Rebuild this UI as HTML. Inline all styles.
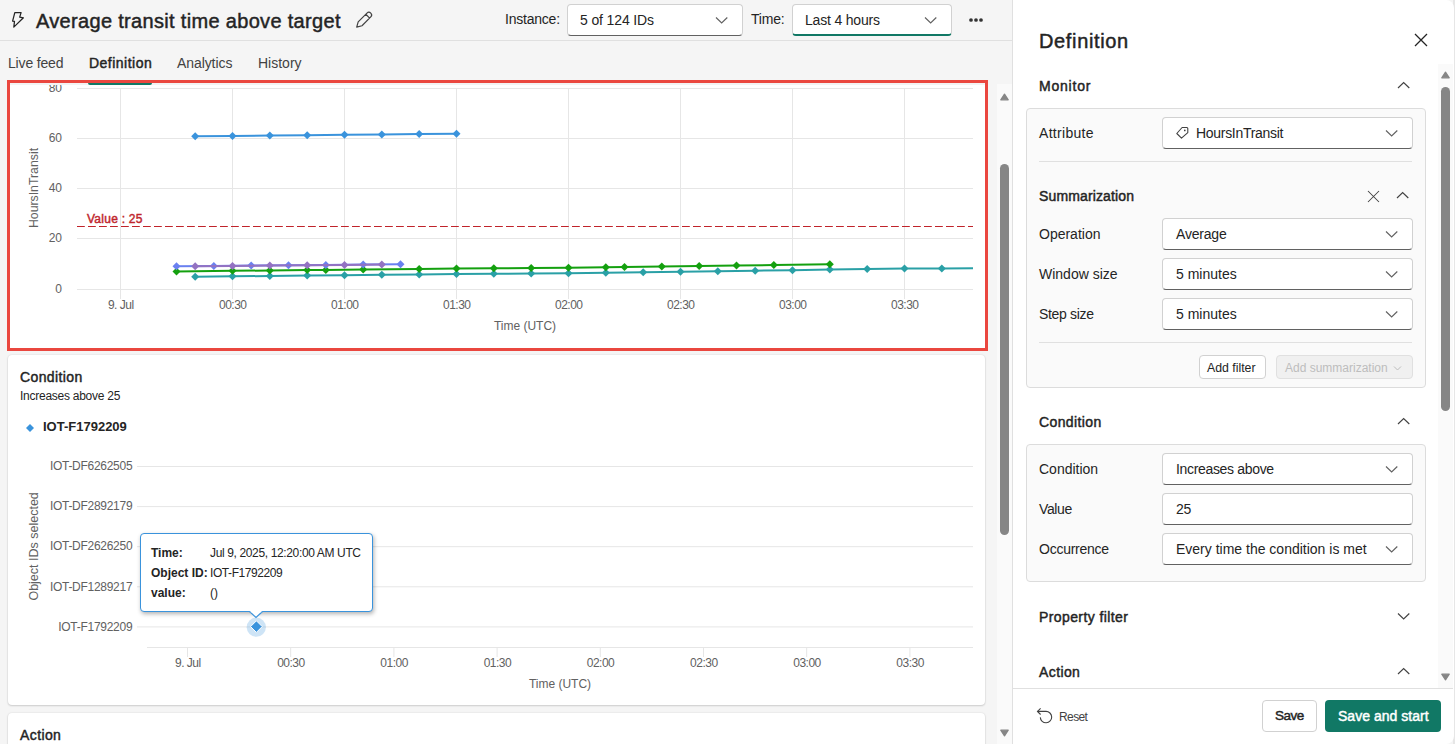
<!DOCTYPE html>
<html><head><meta charset="utf-8"><style>
*{box-sizing:border-box;margin:0;padding:0}
html,body{width:1455px;height:744px;overflow:hidden;background:#f5f5f5;font-family:"Liberation Sans", sans-serif;color:#242424}
.a{position:absolute;white-space:nowrap}
.dd{position:absolute;background:#fff;border:1px solid #d1d1d1;border-bottom-color:#616161;border-radius:4px}
.chev{position:absolute;width:8px;height:8px;border-right:1.3px solid #424242;border-bottom:1.3px solid #424242;transform:rotate(45deg)}
.chevu{position:absolute;width:8px;height:8px;border-left:1.3px solid #424242;border-top:1.3px solid #424242;transform:rotate(45deg)}
.lbl{font-size:14px;color:#242424}
.sb{font-weight:400;-webkit-text-stroke-width:0.45px;font-size:14px}
</style></head><body>
<!-- header -->
<div class="a" style="left:0;top:40px;width:1013px;height:1px;background:#e0e0e0"></div>
<svg class="a" style="left:11px;top:11px" width="15" height="18" viewBox="0 0 15 18"><path d="M3.8,1.6 H10.1 L8.7,6.1 L12.4,6.8 L2.8,16.1 L3.5,10.4 L1.6,10.1 Z" fill="none" stroke="#242424" stroke-width="1.25" stroke-linejoin="round"/></svg>
<div class="a" style="left:36px;top:8px;font-size:20px;letter-spacing:0.32px;font-weight:400;-webkit-text-stroke-width:0.45px;line-height:26px">Average transit time above target</div>
<svg class="a" style="left:345px;top:5px" width="40" height="30"><g transform="translate(11.7,22.2) rotate(-45)"><path d="M0,0 L4.8,-2.7 H17.2 A2.7,2.7 0 0 1 17.2,2.7 H4.8 Z M15.6,-2.7 V2.7" fill="none" stroke="#424242" stroke-width="1.2" stroke-linejoin="round"/></g></svg>
<div class="a" style="left:505px;top:9px;font-size:14px;letter-spacing:-0.22px;line-height:20px">Instance:</div>
<div class="dd" style="left:567px;top:4px;width:176px;height:32px"></div>
<div class="a" style="left:580px;top:10px;font-size:14px;letter-spacing:-0.13px;line-height:20px">5 of 124 IDs</div>
<svg class="a" style="left:713.25px;top:16.20px" width="17.3" height="8.5"><path d="M3,1.5 L8.65,7.00 L14.30,1.5" fill="none" stroke="#616161" stroke-width="1.15" stroke-linejoin="miter"/></svg>
<div class="a" style="left:751px;top:9px;font-size:14px;letter-spacing:-0.2px;line-height:20px">Time:</div>
<div class="dd" style="left:792px;top:4px;width:160px;height:32px;border-bottom:2px solid #117865"></div>
<div class="a" style="left:805px;top:10px;font-size:14px;letter-spacing:-0.18px;line-height:20px">Last 4 hours</div>
<svg class="a" style="left:922.15px;top:16.20px" width="17.3" height="8.5"><path d="M3,1.5 L8.65,7.00 L14.30,1.5" fill="none" stroke="#616161" stroke-width="1.15" stroke-linejoin="miter"/></svg>
<svg class="a" style="left:967px;top:17px" width="18" height="6"><circle cx="4" cy="3" r="1.85" fill="#333"/><circle cx="9" cy="3" r="1.85" fill="#333"/><circle cx="14" cy="3" r="1.85" fill="#333"/></svg>
<!-- tabs -->
<div class="a" style="left:8px;top:54px;font-size:14px;letter-spacing:-0.17px;line-height:18px;color:#424242">Live feed</div>
<div class="a" style="left:89px;top:54px;font-size:14px;letter-spacing:0.48px;line-height:18px;font-weight:400;-webkit-text-stroke-width:0.45px">Definition</div>
<div class="a" style="left:177px;top:54px;font-size:14px;letter-spacing:-0.08px;line-height:18px;color:#424242">Analytics</div>
<div class="a" style="left:258px;top:54px;font-size:14px;line-height:18px;color:#424242">History</div>

<!-- main chart card -->
<div class="a" style="left:7px;top:80px;width:981px;height:271px;background:#fff;border:3px solid #ea473f"></div>
<svg width="1455" height="744" style="position:absolute;left:0;top:0" font-family='"Liberation Sans", sans-serif' font-size="12">
<defs><clipPath id="cp1"><rect x="10" y="85" width="975" height="262"/></clipPath></defs>
<g clip-path="url(#cp1)">
<line x1="77" y1="88.5" x2="973" y2="88.5" stroke="#e6e6e6" stroke-width="1"/><line x1="77" y1="138.5" x2="973" y2="138.5" stroke="#e6e6e6" stroke-width="1"/><line x1="77" y1="188.5" x2="973" y2="188.5" stroke="#e6e6e6" stroke-width="1"/><line x1="77" y1="238.5" x2="973" y2="238.5" stroke="#e6e6e6" stroke-width="1"/><line x1="77" y1="289.5" x2="973" y2="289.5" stroke="#e6e6e6" stroke-width="1"/><line x1="120.5" y1="88" x2="120.5" y2="299" stroke="#e6e6e6" stroke-width="1"/><line x1="232.5" y1="88" x2="232.5" y2="299" stroke="#e6e6e6" stroke-width="1"/><line x1="344.5" y1="88" x2="344.5" y2="299" stroke="#e6e6e6" stroke-width="1"/><line x1="456.5" y1="88" x2="456.5" y2="299" stroke="#e6e6e6" stroke-width="1"/><line x1="568.5" y1="88" x2="568.5" y2="299" stroke="#e6e6e6" stroke-width="1"/><line x1="680.5" y1="88" x2="680.5" y2="299" stroke="#e6e6e6" stroke-width="1"/><line x1="792.5" y1="88" x2="792.5" y2="299" stroke="#e6e6e6" stroke-width="1"/><line x1="904.5" y1="88" x2="904.5" y2="299" stroke="#e6e6e6" stroke-width="1"/>
<g fill="#616161"><text x="62" y="91.5" text-anchor="end">80</text><text x="62" y="141.5" text-anchor="end">60</text><text x="62" y="191.5" text-anchor="end">40</text><text x="62" y="241.5" text-anchor="end">20</text><text x="62" y="292.5" text-anchor="end">0</text><text x="120.75" y="309" text-anchor="middle" letter-spacing="-0.5">9. Jul</text><text x="232.75" y="309" text-anchor="middle" letter-spacing="-0.5">00:30</text><text x="344.75" y="309" text-anchor="middle" letter-spacing="-0.5">01:00</text><text x="456.75" y="309" text-anchor="middle" letter-spacing="-0.5">01:30</text><text x="568.75" y="309" text-anchor="middle" letter-spacing="-0.5">02:00</text><text x="680.75" y="309" text-anchor="middle" letter-spacing="-0.5">02:30</text><text x="792.75" y="309" text-anchor="middle" letter-spacing="-0.5">03:00</text><text x="904.75" y="309" text-anchor="middle" letter-spacing="-0.5">03:30</text>
<text x="525" y="330" text-anchor="middle">Time (UTC)</text>
<text transform="translate(38,188) rotate(-90)" text-anchor="middle" font-size="12.3">HoursInTransit</text>
</g>
<line x1="77" y1="226.5" x2="973" y2="226.5" stroke="#c0232a" stroke-width="1.2" stroke-dasharray="7.8,3.2"/>
<text x="87" y="223" fill="#c0262d" font-size="12" letter-spacing="0.25" stroke="#c0262d" stroke-width="0.45">Value : 25</text>
<path d="M195.2,136.3 L232.5,135.9 L269.8,135.6 L307.2,135.2 L344.5,134.8 L381.8,134.4 L419.2,134.1 L456.5,133.7" fill="none" stroke="#3a93dc" stroke-width="2" stroke-linejoin="round"/><path d="M195.2,132.3 L199.2,136.3 L195.2,140.3 L191.2,136.3Z" fill="#3a93dc"/><path d="M232.5,131.9 L236.5,135.9 L232.5,139.9 L228.5,135.9Z" fill="#3a93dc"/><path d="M269.8,131.6 L273.8,135.6 L269.8,139.6 L265.8,135.6Z" fill="#3a93dc"/><path d="M307.2,131.2 L311.2,135.2 L307.2,139.2 L303.2,135.2Z" fill="#3a93dc"/><path d="M344.5,130.8 L348.5,134.8 L344.5,138.8 L340.5,134.8Z" fill="#3a93dc"/><path d="M381.8,130.4 L385.8,134.4 L381.8,138.4 L377.8,134.4Z" fill="#3a93dc"/><path d="M419.2,130.1 L423.2,134.1 L419.2,138.1 L415.2,134.1Z" fill="#3a93dc"/><path d="M456.5,129.7 L460.5,133.7 L456.5,137.7 L452.5,133.7Z" fill="#3a93dc"/><path d="M195.2,276.7 L232.5,276.3 L269.8,276.0 L307.2,275.6 L344.5,275.2 L381.8,274.8 L419.2,274.5 L456.5,274.1 L493.8,273.8 L531.2,273.6 L568.5,273.3 L605.8,272.8 L643.2,272.2 L680.5,271.7 L717.8,271.2 L755.2,270.7 L792.5,270.2 L829.8,269.6 L867.2,269.1 L904.5,268.6 L941.8,268.4 L973.0,268.2" fill="none" stroke="#2aa0a6" stroke-width="2" stroke-linejoin="round"/><path d="M195.2,272.7 L199.2,276.7 L195.2,280.7 L191.2,276.7Z" fill="#2aa0a6"/><path d="M232.5,272.3 L236.5,276.3 L232.5,280.3 L228.5,276.3Z" fill="#2aa0a6"/><path d="M269.8,272.0 L273.8,276.0 L269.8,280.0 L265.8,276.0Z" fill="#2aa0a6"/><path d="M307.2,271.6 L311.2,275.6 L307.2,279.6 L303.2,275.6Z" fill="#2aa0a6"/><path d="M344.5,271.2 L348.5,275.2 L344.5,279.2 L340.5,275.2Z" fill="#2aa0a6"/><path d="M381.8,270.8 L385.8,274.8 L381.8,278.8 L377.8,274.8Z" fill="#2aa0a6"/><path d="M419.2,270.5 L423.2,274.5 L419.2,278.5 L415.2,274.5Z" fill="#2aa0a6"/><path d="M456.5,270.1 L460.5,274.1 L456.5,278.1 L452.5,274.1Z" fill="#2aa0a6"/><path d="M493.8,269.8 L497.8,273.8 L493.8,277.8 L489.8,273.8Z" fill="#2aa0a6"/><path d="M531.2,269.6 L535.2,273.6 L531.2,277.6 L527.2,273.6Z" fill="#2aa0a6"/><path d="M568.5,269.3 L572.5,273.3 L568.5,277.3 L564.5,273.3Z" fill="#2aa0a6"/><path d="M605.8,268.8 L609.8,272.8 L605.8,276.8 L601.8,272.8Z" fill="#2aa0a6"/><path d="M643.2,268.2 L647.2,272.2 L643.2,276.2 L639.2,272.2Z" fill="#2aa0a6"/><path d="M680.5,267.7 L684.5,271.7 L680.5,275.7 L676.5,271.7Z" fill="#2aa0a6"/><path d="M717.8,267.2 L721.8,271.2 L717.8,275.2 L713.8,271.2Z" fill="#2aa0a6"/><path d="M755.2,266.7 L759.2,270.7 L755.2,274.7 L751.2,270.7Z" fill="#2aa0a6"/><path d="M792.5,266.2 L796.5,270.2 L792.5,274.2 L788.5,270.2Z" fill="#2aa0a6"/><path d="M829.8,265.6 L833.8,269.6 L829.8,273.6 L825.8,269.6Z" fill="#2aa0a6"/><path d="M867.2,265.1 L871.2,269.1 L867.2,273.1 L863.2,269.1Z" fill="#2aa0a6"/><path d="M904.5,264.6 L908.5,268.6 L904.5,272.6 L900.5,268.6Z" fill="#2aa0a6"/><path d="M941.8,264.4 L945.8,268.4 L941.8,272.4 L937.8,268.4Z" fill="#2aa0a6"/><path d="M176.5,271.4 L232.5,270.8 L269.8,270.5 L307.2,270.1 L325.8,269.9 L363.2,269.5 L419.2,269.0 L456.5,268.6 L493.8,268.3 L531.2,268.0 L568.5,267.7 L605.8,267.2 L624.5,267.0 L661.8,266.5 L699.2,266.0 L736.5,265.5 L773.8,265.0 L829.8,264.3" fill="none" stroke="#14a00f" stroke-width="2" stroke-linejoin="round"/><path d="M176.5,267.4 L180.5,271.4 L176.5,275.4 L172.5,271.4Z" fill="#14a00f"/><path d="M232.5,266.8 L236.5,270.8 L232.5,274.8 L228.5,270.8Z" fill="#14a00f"/><path d="M269.8,266.5 L273.8,270.5 L269.8,274.5 L265.8,270.5Z" fill="#14a00f"/><path d="M307.2,266.1 L311.2,270.1 L307.2,274.1 L303.2,270.1Z" fill="#14a00f"/><path d="M325.8,265.9 L329.8,269.9 L325.8,273.9 L321.8,269.9Z" fill="#14a00f"/><path d="M363.2,265.5 L367.2,269.5 L363.2,273.5 L359.2,269.5Z" fill="#14a00f"/><path d="M419.2,265.0 L423.2,269.0 L419.2,273.0 L415.2,269.0Z" fill="#14a00f"/><path d="M456.5,264.6 L460.5,268.6 L456.5,272.6 L452.5,268.6Z" fill="#14a00f"/><path d="M493.8,264.3 L497.8,268.3 L493.8,272.3 L489.8,268.3Z" fill="#14a00f"/><path d="M531.2,264.0 L535.2,268.0 L531.2,272.0 L527.2,268.0Z" fill="#14a00f"/><path d="M568.5,263.7 L572.5,267.7 L568.5,271.7 L564.5,267.7Z" fill="#14a00f"/><path d="M605.8,263.2 L609.8,267.2 L605.8,271.2 L601.8,267.2Z" fill="#14a00f"/><path d="M624.5,263.0 L628.5,267.0 L624.5,271.0 L620.5,267.0Z" fill="#14a00f"/><path d="M661.8,262.5 L665.8,266.5 L661.8,270.5 L657.8,266.5Z" fill="#14a00f"/><path d="M699.2,262.0 L703.2,266.0 L699.2,270.0 L695.2,266.0Z" fill="#14a00f"/><path d="M736.5,261.5 L740.5,265.5 L736.5,269.5 L732.5,265.5Z" fill="#14a00f"/><path d="M773.8,261.0 L777.8,265.0 L773.8,269.0 L769.8,265.0Z" fill="#14a00f"/><path d="M829.8,260.3 L833.8,264.3 L829.8,268.3 L825.8,264.3Z" fill="#14a00f"/><path d="M176.5,266.3 L213.8,265.9 L251.2,265.6 L288.5,265.2 L325.8,264.9 L363.2,264.5 L400.5,264.2" fill="none" stroke="#6a80f0" stroke-width="2" stroke-linejoin="round"/><path d="M176.5,262.3 L180.5,266.3 L176.5,270.3 L172.5,266.3Z" fill="#6a80f0"/><path d="M213.8,261.9 L217.8,265.9 L213.8,269.9 L209.8,265.9Z" fill="#6a80f0"/><path d="M251.2,261.6 L255.2,265.6 L251.2,269.6 L247.2,265.6Z" fill="#6a80f0"/><path d="M288.5,261.2 L292.5,265.2 L288.5,269.2 L284.5,265.2Z" fill="#6a80f0"/><path d="M325.8,260.9 L329.8,264.9 L325.8,268.9 L321.8,264.9Z" fill="#6a80f0"/><path d="M363.2,260.5 L367.2,264.5 L363.2,268.5 L359.2,264.5Z" fill="#6a80f0"/><path d="M400.5,260.2 L404.5,264.2 L400.5,268.2 L396.5,264.2Z" fill="#6a80f0"/><path d="M195.2,266.3 L232.5,266.0 L269.8,265.6 L307.2,265.3 L344.5,264.9 L381.8,264.6" fill="none" stroke="#9372c2" stroke-width="2" stroke-linejoin="round"/><path d="M195.2,262.3 L199.2,266.3 L195.2,270.3 L191.2,266.3Z" fill="#9372c2"/><path d="M232.5,262.0 L236.5,266.0 L232.5,270.0 L228.5,266.0Z" fill="#9372c2"/><path d="M269.8,261.6 L273.8,265.6 L269.8,269.6 L265.8,265.6Z" fill="#9372c2"/><path d="M307.2,261.3 L311.2,265.3 L307.2,269.3 L303.2,265.3Z" fill="#9372c2"/><path d="M344.5,260.9 L348.5,264.9 L344.5,268.9 L340.5,264.9Z" fill="#9372c2"/><path d="M381.8,260.6 L385.8,264.6 L381.8,268.6 L377.8,264.6Z" fill="#9372c2"/>
</g>
</svg>
<div class="a" style="left:10px;top:83px;width:975px;height:2px;background:#f3f3f3"></div>
<div class="a" style="left:88px;top:82.5px;width:64px;height:2.5px;background:#117865;border-radius:0 0 2px 2px"></div>

<!-- condition card -->
<div class="a" style="left:8px;top:355px;width:977px;height:350px;background:#fff;border-radius:4px;box-shadow:0 0 2px rgba(0,0,0,0.12),0 1px 2px rgba(0,0,0,0.14)"></div>
<div class="a" style="left:20px;top:368px;font-size:14px;letter-spacing:0.38px;font-weight:400;-webkit-text-stroke-width:0.45px;line-height:18px">Condition</div>
<div class="a" style="left:20px;top:388px;font-size:12px;letter-spacing:-0.26px;line-height:16px">Increases above 25</div>
<div class="a" style="left:43px;top:418px;font-size:13px;font-weight:700;line-height:18px">IOT-F1792209</div>
<svg width="1455" height="744" style="position:absolute;left:0;top:0" font-family='"Liberation Sans", sans-serif' font-size="12">
<line x1="137" y1="466.5" x2="973" y2="466.5" stroke="#e6e6e6" stroke-width="1"/><text x="132.3" y="469.7" text-anchor="end" fill="#616161" letter-spacing="-0.28">IOT-DF6262505</text><line x1="137" y1="506.6" x2="973" y2="506.6" stroke="#e6e6e6" stroke-width="1"/><text x="132.3" y="510.1" text-anchor="end" fill="#616161" letter-spacing="-0.28">IOT-DF2892179</text><line x1="137" y1="546.7" x2="973" y2="546.7" stroke="#e6e6e6" stroke-width="1"/><text x="132.3" y="550.4" text-anchor="end" fill="#616161" letter-spacing="-0.28">IOT-DF2626250</text><line x1="137" y1="586.8" x2="973" y2="586.8" stroke="#e6e6e6" stroke-width="1"/><text x="132.3" y="590.8" text-anchor="end" fill="#616161" letter-spacing="-0.28">IOT-DF1289217</text><line x1="137" y1="626.9" x2="973" y2="626.9" stroke="#e6e6e6" stroke-width="1"/><text x="132.3" y="631.1" text-anchor="end" fill="#616161" letter-spacing="-0.28">IOT-F1792209</text><line x1="147" y1="647.5" x2="973" y2="647.5" stroke="#e6e6e6" stroke-width="1"/><line x1="187.5" y1="647" x2="187.5" y2="657" stroke="#e6e6e6" stroke-width="1"/><text x="187.8" y="667" text-anchor="middle" fill="#616161" letter-spacing="-0.5">9. Jul</text><line x1="290.7" y1="647" x2="290.7" y2="657" stroke="#e6e6e6" stroke-width="1"/><text x="290.9" y="667" text-anchor="middle" fill="#616161" letter-spacing="-0.5">00:30</text><line x1="393.9" y1="647" x2="393.9" y2="657" stroke="#e6e6e6" stroke-width="1"/><text x="394.1" y="667" text-anchor="middle" fill="#616161" letter-spacing="-0.5">01:00</text><line x1="497.1" y1="647" x2="497.1" y2="657" stroke="#e6e6e6" stroke-width="1"/><text x="497.4" y="667" text-anchor="middle" fill="#616161" letter-spacing="-0.5">01:30</text><line x1="600.3" y1="647" x2="600.3" y2="657" stroke="#e6e6e6" stroke-width="1"/><text x="600.5" y="667" text-anchor="middle" fill="#616161" letter-spacing="-0.5">02:00</text><line x1="703.5" y1="647" x2="703.5" y2="657" stroke="#e6e6e6" stroke-width="1"/><text x="703.8" y="667" text-anchor="middle" fill="#616161" letter-spacing="-0.5">02:30</text><line x1="806.7" y1="647" x2="806.7" y2="657" stroke="#e6e6e6" stroke-width="1"/><text x="807.0" y="667" text-anchor="middle" fill="#616161" letter-spacing="-0.5">03:00</text><line x1="909.9" y1="647" x2="909.9" y2="657" stroke="#e6e6e6" stroke-width="1"/><text x="910.1" y="667" text-anchor="middle" fill="#616161" letter-spacing="-0.5">03:30</text><text x="560" y="688" text-anchor="middle" fill="#616161">Time (UTC)</text><text transform="translate(37.8,546.4) rotate(-90)" text-anchor="middle" fill="#616161" font-size="12.5">Object IDs selected</text>
<circle cx="256.3" cy="627.2" r="9.6" fill="#3a93dc" fill-opacity="0.25"/>
<path d="M256.4,620.8 L262.2,626.6 L256.4,632.4 L250.6,626.6Z" fill="#3a93dc" stroke="#fff" stroke-width="1"/>
<path d="M30,424 L34,428 L30,432 L26,428Z" fill="#3a93dc"/>
</svg>
<!-- tooltip -->
<div class="a" style="left:140px;top:533px;width:233px;height:79px;background:#fff;border:1px solid #3a93dc;border-radius:4px;box-shadow:1px 2px 4px rgba(0,0,0,0.3)"></div>
<svg class="a" style="left:248.5px;top:610px" width="14" height="9"><path d="M0.5,1.5 L7,7.5 L13.5,1.5" fill="#fff" stroke="#3a93dc" stroke-width="1.2"/><rect x="1.6" y="0" width="10.8" height="2.3" fill="#fff"/></svg>
<div class="a" style="left:151px;top:545px;font-size:12px;line-height:16px;font-weight:700">Time:</div>
<div class="a" style="left:210px;top:545px;font-size:12px;letter-spacing:-0.36px;line-height:16px">Jul 9, 2025, 12:20:00 AM UTC</div>
<div class="a" style="left:151px;top:565px;font-size:12px;line-height:16px;font-weight:700">Object ID:</div>
<div class="a" style="left:210px;top:565px;font-size:12px;letter-spacing:-0.42px;line-height:16px">IOT-F1792209</div>
<div class="a" style="left:151px;top:585px;font-size:12px;line-height:16px;font-weight:700">value:</div>
<div class="a" style="left:210px;top:585px;font-size:12px;line-height:16px">()</div>

<!-- action card -->
<div class="a" style="left:8px;top:713px;width:977px;height:60px;background:#fff;border-radius:4px;box-shadow:0 0 2px rgba(0,0,0,0.12),0 1px 2px rgba(0,0,0,0.14)"></div>
<div class="a" style="left:20px;top:726px;font-size:14px;letter-spacing:0.4px;font-weight:400;-webkit-text-stroke-width:0.45px;line-height:18px">Action</div>

<!-- left scrollbar -->
<div class="a" style="left:997px;top:84px;width:15px;height:660px;background:#fafafa"></div>
<svg class="a" style="left:1000px;top:92.8px" width="9" height="8"><path d="M4.5,1.2 L8.2,6.8 L0.8,6.8Z" fill="#868686" stroke="#868686" stroke-width="1.3" stroke-linejoin="round"/></svg>
<div class="a" style="left:1000px;top:164px;width:9px;height:371px;background:#868686;border-radius:5px"></div>
<svg class="a" style="left:1000px;top:729px" width="9" height="8"><path d="M0.8,1.2 L8.2,1.2 L4.5,6.8Z" fill="#868686" stroke="#868686" stroke-width="1.3" stroke-linejoin="round"/></svg>

<!-- right panel -->
<div class="a" style="left:1453px;top:0;width:2px;height:744px;background:#e6e6e6"></div>
<div class="a" style="left:1012px;top:0;width:442px;height:744px;background:#fff;border-left:1px solid #e0e0e0;border-radius:0 8px 8px 0"></div>
<div class="a" style="left:1039px;top:29px;font-size:20px;letter-spacing:0.64px;font-weight:400;-webkit-text-stroke-width:0.45px;line-height:24px">Definition</div>
<svg class="a" style="left:1414px;top:33px" width="14" height="14"><path d="M1,1 L13,13 M13,1 L1,13" stroke="#242424" stroke-width="1.3"/></svg>
<div class="a sb" style="left:1039px;top:77px;line-height:18px;letter-spacing:0.78px">Monitor</div>
<svg class="a" style="left:1395.35px;top:81.30px" width="17.3" height="8.5"><path d="M3,7.00 L8.65,1.5 L14.30,7.00" fill="none" stroke="#424242" stroke-width="1.15" stroke-linejoin="miter"/></svg>

<!-- monitor card -->
<div class="a" style="left:1026px;top:108px;width:400px;height:280px;background:#fafafa;border:1px solid #dcdcdc;border-radius:4px"></div>
<div class="a lbl" style="left:1039px;top:124px;line-height:18px;letter-spacing:0.3px">Attribute</div>
<div class="dd" style="left:1162px;top:117px;width:251px;height:32px"></div>
<svg class="a" style="left:1176px;top:126px" width="13" height="13" viewBox="0 0 13 13"><path d="M6.1,1.5 H10.8 Q11.8,1.5 11.8,2.5 V6.6 L5.5,12.2 L0.8,7.5 Z" fill="none" stroke="#424242" stroke-width="1.1" stroke-linejoin="round"/><circle cx="8.8" cy="4.4" r="0.85" fill="#424242"/></svg>
<div class="a lbl" style="left:1196px;top:124px;line-height:18px;letter-spacing:-0.3px">HoursInTransit</div>
<svg class="a" style="left:1383.35px;top:129.40px" width="17.3" height="8.5"><path d="M3,1.5 L8.65,7.00 L14.30,1.5" fill="none" stroke="#616161" stroke-width="1.15" stroke-linejoin="miter"/></svg>
<div class="a" style="left:1039px;top:161px;width:373px;height:1px;background:#e0e0e0"></div>
<div class="a" style="left:1039px;top:187px;font-size:14px;letter-spacing:0.13px;font-weight:400;-webkit-text-stroke-width:0.45px;line-height:18px">Summarization</div>
<svg class="a" style="left:1366.5px;top:189.5px" width="13" height="13"><path d="M1,1 L12,12 M12,1 L1,12" stroke="#424242" stroke-width="1.05"/></svg>
<svg class="a" style="left:1394.35px;top:191.30px" width="17.3" height="8.5"><path d="M3,7.00 L8.65,1.5 L14.30,7.00" fill="none" stroke="#424242" stroke-width="1.15" stroke-linejoin="miter"/></svg>
<div class="a lbl" style="left:1039px;top:225px;line-height:18px;font-size:14px;letter-spacing:0px">Operation</div><div class="dd" style="left:1162px;top:218px;width:251px;height:32px"></div><div class="a lbl" style="left:1176px;top:225px;line-height:18px;font-size:14px;letter-spacing:-0.2px">Average</div><svg class="a" style="left:1383.35px;top:229.90px" width="17.3" height="8.5"><path d="M3,1.5 L8.65,7.00 L14.30,1.5" fill="none" stroke="#616161" stroke-width="1.15" stroke-linejoin="miter"/></svg><div class="a lbl" style="left:1039px;top:265px;line-height:18px;font-size:14px;letter-spacing:0px">Window size</div><div class="dd" style="left:1162px;top:258px;width:251px;height:32px"></div><div class="a lbl" style="left:1176px;top:265px;line-height:18px;font-size:14px;letter-spacing:0px">5 minutes</div><svg class="a" style="left:1383.35px;top:269.90px" width="17.3" height="8.5"><path d="M3,1.5 L8.65,7.00 L14.30,1.5" fill="none" stroke="#616161" stroke-width="1.15" stroke-linejoin="miter"/></svg><div class="a lbl" style="left:1039px;top:305px;line-height:18px;font-size:14px;letter-spacing:-0.33px">Step size</div><div class="dd" style="left:1162px;top:298px;width:251px;height:32px"></div><div class="a lbl" style="left:1176px;top:305px;line-height:18px;font-size:14px;letter-spacing:0px">5 minutes</div><svg class="a" style="left:1383.35px;top:309.90px" width="17.3" height="8.5"><path d="M3,1.5 L8.65,7.00 L14.30,1.5" fill="none" stroke="#616161" stroke-width="1.15" stroke-linejoin="miter"/></svg><div class="a" style="left:1039px;top:342px;width:373px;height:1px;background:#e0e0e0"></div>
<div class="a" style="left:1199px;top:355px;width:67px;height:24px;background:#fff;border:1px solid #d1d1d1;border-radius:4px"></div>
<div class="a" style="left:1207px;top:360px;font-size:12.3px;line-height:16px">Add filter</div>
<div class="a" style="left:1276px;top:355px;width:137px;height:24px;background:#f0f0f0;border:1px solid #e0e0e0;border-radius:4px"></div>
<div class="a" style="left:1285px;top:360px;font-size:12px;line-height:16px;color:#bdbdbd">Add summarization</div>
<svg class="a" style="left:1391.00px;top:365.00px" width="13.0" height="6.5"><path d="M3,1.5 L6.50,5.00 L10.00,1.5" fill="none" stroke="#bdbdbd" stroke-width="1" stroke-linejoin="miter"/></svg>

<div class="a sb" style="left:1039px;top:413px;line-height:18px;font-size:14px;letter-spacing:0.38px">Condition</div>
<svg class="a" style="left:1395.35px;top:417.30px" width="17.3" height="8.5"><path d="M3,7.00 L8.65,1.5 L14.30,7.00" fill="none" stroke="#424242" stroke-width="1.15" stroke-linejoin="miter"/></svg>
<div class="a" style="left:1026px;top:444px;width:400px;height:138px;background:#fafafa;border:1px solid #dcdcdc;border-radius:4px"></div>
<div class="a lbl" style="left:1039px;top:460px;line-height:18px;font-size:14px;letter-spacing:0px">Condition</div><div class="dd" style="left:1162px;top:453px;width:251px;height:32px"></div><div class="a lbl" style="left:1176px;top:460px;line-height:18px;font-size:14px;letter-spacing:-0.33px">Increases above</div><svg class="a" style="left:1383.35px;top:464.90px" width="17.3" height="8.5"><path d="M3,1.5 L8.65,7.00 L14.30,1.5" fill="none" stroke="#616161" stroke-width="1.15" stroke-linejoin="miter"/></svg><div class="a lbl" style="left:1039px;top:500px;line-height:18px;font-size:14px;letter-spacing:-0.4px">Value</div><div class="dd" style="left:1162px;top:493px;width:251px;height:32px"></div><div class="a lbl" style="left:1176px;top:500px;line-height:18px;font-size:14px;letter-spacing:-0.4px">25</div><div class="a lbl" style="left:1039px;top:540px;line-height:18px;font-size:14px;letter-spacing:-0.25px">Occurrence</div><div class="dd" style="left:1162px;top:533px;width:251px;height:32px"></div><div class="a lbl" style="left:1176px;top:540px;line-height:18px;font-size:14px;letter-spacing:0px">Every time the condition is met</div><svg class="a" style="left:1383.35px;top:544.90px" width="17.3" height="8.5"><path d="M3,1.5 L8.65,7.00 L14.30,1.5" fill="none" stroke="#616161" stroke-width="1.15" stroke-linejoin="miter"/></svg>
<div class="a sb" style="left:1039px;top:608px;line-height:18px;font-size:14px;letter-spacing:0.4px">Property filter</div>
<svg class="a" style="left:1395.35px;top:612.30px" width="17.3" height="8.5"><path d="M3,1.5 L8.65,7.00 L14.30,1.5" fill="none" stroke="#424242" stroke-width="1.15" stroke-linejoin="miter"/></svg>
<div class="a sb" style="left:1039px;top:663px;line-height:18px;font-size:14px;letter-spacing:0.4px">Action</div>
<svg class="a" style="left:1395.35px;top:667.10px" width="17.3" height="8.5"><path d="M3,7.00 L8.65,1.5 L14.30,7.00" fill="none" stroke="#424242" stroke-width="1.15" stroke-linejoin="miter"/></svg>

<!-- right scrollbar -->
<div class="a" style="left:1438px;top:64px;width:15px;height:624px;background:#fafafa"></div>
<svg class="a" style="left:1441px;top:71px" width="9" height="8"><path d="M4.5,1.2 L8.2,6.8 L0.8,6.8Z" fill="#868686" stroke="#868686" stroke-width="1.3" stroke-linejoin="round"/></svg>
<div class="a" style="left:1441px;top:87px;width:9px;height:324px;background:#868686;border-radius:5px"></div>
<svg class="a" style="left:1441px;top:673px" width="9" height="8"><path d="M0.8,1.2 L8.2,1.2 L4.5,6.8Z" fill="#868686" stroke="#868686" stroke-width="1.3" stroke-linejoin="round"/></svg>

<!-- footer -->
<div class="a" style="left:1013px;top:688px;width:440px;height:1px;background:#e0e0e0"></div>
<svg class="a" style="left:1036px;top:707px" width="18" height="18" viewBox="0 0 18 18"><path d="M1.5,4.4 H9.9 A5.7,5.7 0 1 1 4.3,10.4" fill="none" stroke="#424242" stroke-width="1.1"/><path d="M4.6,1.3 L1.5,4.4 L4.6,7.5" fill="none" stroke="#424242" stroke-width="1.1"/></svg>
<div class="a" style="left:1059px;top:709px;font-size:12px;letter-spacing:-0.6px;line-height:16px;color:#424242">Reset</div>
<div class="a" style="left:1262px;top:700px;width:55px;height:32px;background:#fff;border:1px solid #d1d1d1;border-radius:4px"></div>
<div class="a" style="left:1275px;top:707px;font-size:13.5px;letter-spacing:-0.5px;font-weight:400;-webkit-text-stroke-width:0.45px;line-height:18px">Save</div>
<div class="a" style="left:1325px;top:700px;width:116px;height:32px;background:#117865;border-radius:4px"></div>
<div class="a" style="left:1338px;top:707px;font-size:14px;letter-spacing:0.03px;font-weight:400;-webkit-text-stroke-width:0.45px;line-height:18px;color:#fff">Save and start</div>
</body></html>
